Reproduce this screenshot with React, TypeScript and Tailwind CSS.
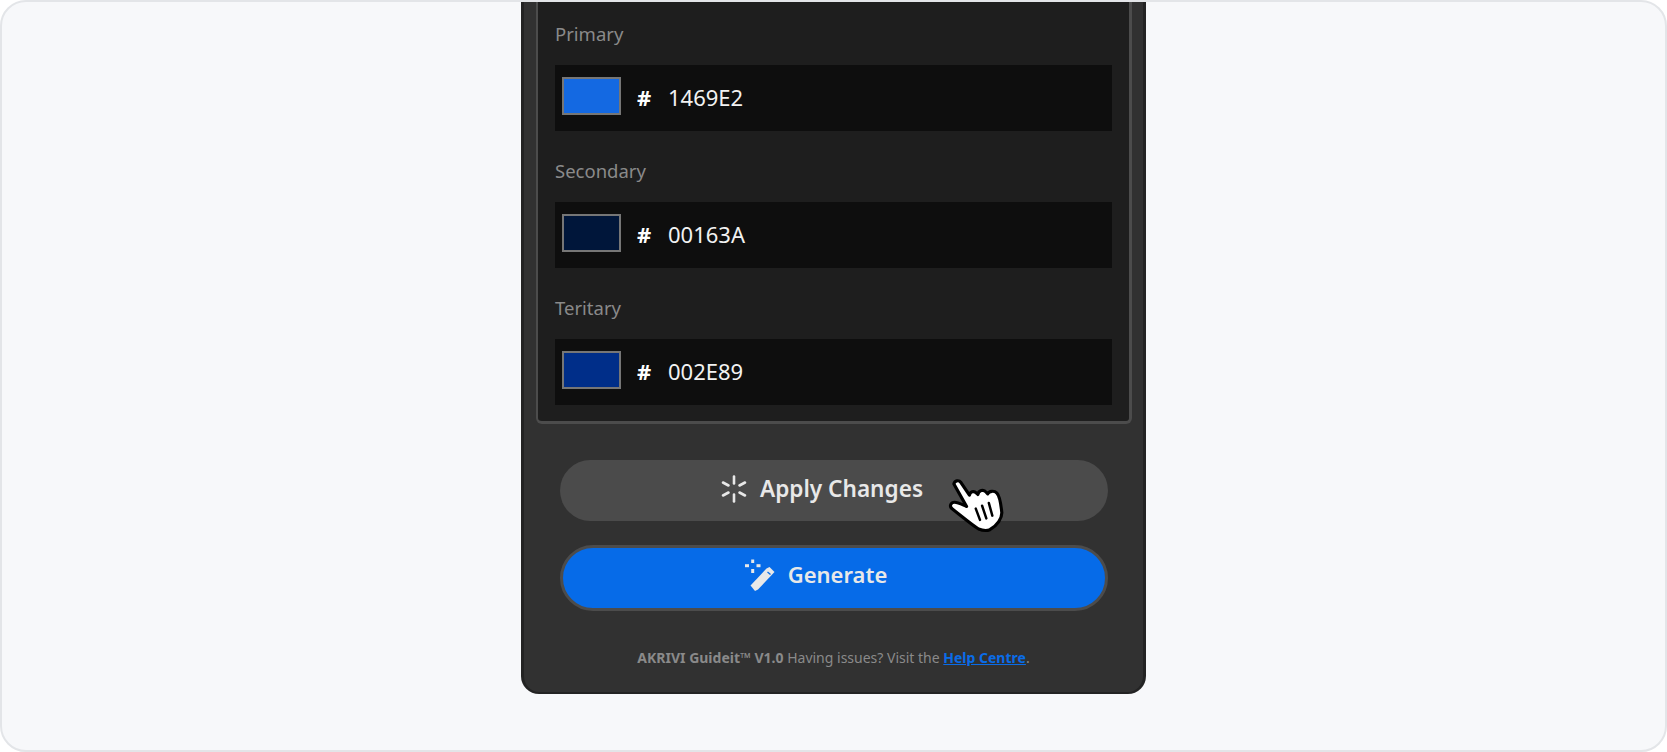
import React from 'react';

const COLOURS = [
  { label: 'Primary', hex: '1469E2', swatch: 'bg-[#1469E2]' },
  { label: 'Secondary', hex: '00163A', swatch: 'bg-[#00163A]' },
  { label: 'Teritary', hex: '002E89', swatch: 'bg-[#002E89]' },
];

const SparkIcon = () => (
  <svg width="30" height="30" viewBox="0 0 30 30" fill="none" stroke="#e8e8e8" strokeWidth="2.6" strokeLinecap="round">
    <path d="M15 2.5V9.5" />
    <path d="M15 20.5V27.5" />
    <path d="M4 8.5L9.5 11.5" />
    <path d="M26 8.5L20.5 11.5" />
    <path d="M4 21.5L9.5 18.5" />
    <path d="M26 21.5L20.5 18.5" />
  </svg>
);

const WandIcon = () => (
  <svg width="34" height="34" viewBox="10 8 34 34" fill="none">
    <path d="M19.5 35.5L24 41L27 39.5L43.5 22L38.5 17L35.5 18.5Z" fill="#e8e8e8" />
    <path d="M36.5 22L39.5 24.5" stroke="#066BE8" strokeWidth="1.3" />
    <g stroke="#e8e8e8" strokeWidth="3" strokeLinecap="butt">
      <path d="M21.7 9.5V13" />
      <path d="M21.7 19V23" />
      <path d="M14 15.7H18" />
      <path d="M25.5 15.7H29.5" />
    </g>
  </svg>
);

const HandCursor = () => (
  <svg width="74" height="74" viewBox="0 0 210 210" className="absolute left-[377px] top-[7px]">
    <path
      d="M48 48C50 38 62 36 68 44L92 80C94 70 104 66 112 74L116 78C118 66 132 62 140 72L144 76C148 68 162 66 170 74C178 82 182 110 184 130C184 145 172 165 150 178C140 182 128 180 118 176C100 165 70 140 42 118C34 110 40 100 50 100C60 100 74 108 84 112Z"
      fill="#fff"
      stroke="#000"
      strokeWidth="9"
      strokeLinejoin="round"
    />
    <g stroke="#000" strokeWidth="7" strokeLinecap="round">
      <path d="M110 118L122 150" />
      <path d="M128 110L140 146" />
      <path d="M147 102L157 138" />
    </g>
  </svg>
);

export default function App() {
  return (
    <div className="h-[752px] w-[1667px] overflow-hidden rounded-[26px] border-2 border-[#e3e5e8] bg-[#f7f8fa] font-['Noto_Sans',sans-serif]">
      <div className="ml-[519px] h-[692px] w-[625px] rounded-b-[18px] border-x-[3px] border-b-[2px] border-[#232323] bg-[#313131]">
        <div className="ml-[12px] w-[596px] rounded-b-[6px] border-b-[3px] border-l-2 border-r-[3px] border-[#4c4c4c] bg-[#1e1e1e] px-[17px] pb-[16px] pt-[20px]">
          {COLOURS.map((c, i) => (
            <div key={c.label} className={i > 0 ? 'mt-[28px]' : ''}>
              <div className="h-[24px] text-[18.5px] leading-[24px] text-[#8a8a8a]">{c.label}</div>
              <div className="mt-[19px] flex h-[66px] w-[557px] items-center bg-[#0e0e0e] pb-[2px] pl-[7px]">
                <div className={`mb-[2px] h-[38px] w-[59px] border-2 border-[#767676] ${c.swatch}`} />
                <span className="ml-[16px] w-[31px] text-[22px] font-bold text-white">#</span>
                <span className="text-[22px] text-[#f2f2f2]">{c.hex}</span>
              </div>
            </div>
          ))}
        </div>

        <div className="relative ml-[36px] mr-[35px] mt-[36px] flex flex-col gap-[24px]">
          <button className="flex h-[61px] items-center justify-center gap-[11px] rounded-full bg-[#4b4b4b] pb-[3px] pr-[26px] text-[22.6px] font-semibold text-[#e8e8e8]">
            <SparkIcon />
            Apply Changes
          </button>
          <button className="flex h-[66px] items-center justify-center gap-[13px] rounded-full border-[3px] border-[#4c4c4c] bg-[#066BE8] pb-[7px] pr-[40px] text-[22px] font-semibold text-[#e8e8e8]">
            <WandIcon />
            Generate
          </button>
          <HandCursor />
        </div>

        <p className="mt-[37px] h-[20px] text-center text-[14px] leading-[20px] text-[#8a8a8a]">
          <span className="font-bold">AKRIVI Guideit™ V1.0</span> Having issues? Visit the{' '}
          <a href="#" className="font-bold text-[#0a6ce8] underline">Help Centre</a>.
        </p>
      </div>
    </div>
  );
}
